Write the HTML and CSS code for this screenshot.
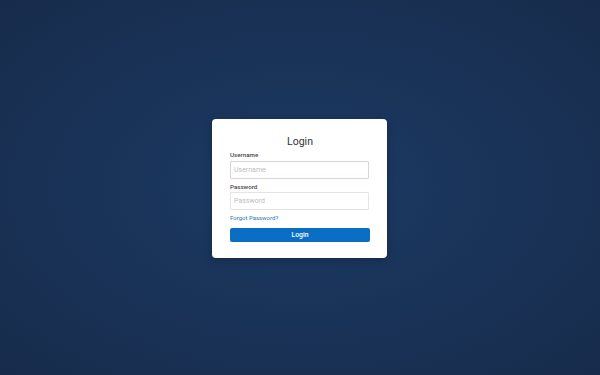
FILE: index.html
```html
<!DOCTYPE html>
<html lang="en">
<head>
<meta charset="utf-8">
<title>Login</title>
<link rel="stylesheet" href="styles.css">
</head>
<body>
<main class="page">
  <form class="card">
    <h1 class="title">Login</h1>
    <label class="label" for="u">Username</label>
    <input class="field field-active" id="u" type="text" placeholder="Username">
    <label class="label label-pw" for="p">Password</label>
    <input class="field" id="p" type="password" placeholder="Password">
    <a class="forgot" href="#">Forgot Password?</a>
    <button class="btn" type="button">Login</button>
  </form>
</main>
</body>
</html>
```
FILE: styles.css
```css
html, body {
  margin: 0;
  padding: 0;
  height: 100%;
}
body {
  font-family: Roboto, "Liberation Sans", sans-serif;
  background: radial-gradient(ellipse at 50% 50%, #1c3c66 0%, #1a345a 40%, #172c4c 100%);
}
.page {
  height: 375px;
  display: flex;
  align-items: center;
  justify-content: center;
}
.card {
  width: 140px;
  padding: 16px 17px 16px 18px;
  background: #fff;
  border-radius: 4px;
  box-shadow: 0 2px 8px rgba(0, 0, 0, 0.25);
  display: flex;
  flex-direction: column;
  margin: 1px 1px 0 0;
}
.title {
  margin: 0 0 3px;
  font-size: 10.5px;
  line-height: 13px;
  font-weight: 400;
  color: #333;
  text-align: center;
}
.label {
  font-size: 6.2px;
  line-height: 8px;
  font-weight: 500;
  color: #4a4a4a;
  margin-bottom: 2px;
}
.label-pw {
  margin-top: 4px;
  margin-bottom: 1px;
}
.field {
  box-sizing: border-box;
  width: 139px;
  height: 18px;
  margin: 0;
  padding: 0 0 0 3px;
  border: 1px solid #e4e4e4;
  border-radius: 1px;
  font-family: Roboto, "Liberation Sans", sans-serif;
  font-size: 7px;
  color: #333;
  outline: none;
}
.field-active {
  border-color: #e2d0d2;
}
.field::placeholder {
  color: #bdbdbd;
}
.forgot {
  margin-top: 4px;
  font-size: 6px;
  line-height: 8px;
  color: #2b78b5;
  text-decoration: none;
}
.btn {
  margin-top: 6px;
  height: 14px;
  width: 140px;
  padding: 0;
  border: none;
  border-radius: 2px;
  background: #0a6fc4;
  color: #fff;
  font-family: Roboto, "Liberation Sans", sans-serif;
  font-size: 6.8px;
  font-weight: 500;
}
```
